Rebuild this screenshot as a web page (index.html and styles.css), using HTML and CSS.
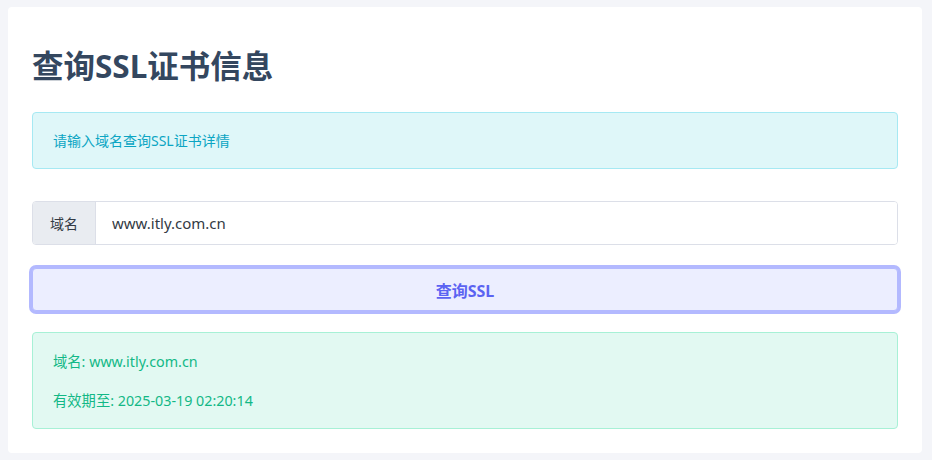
FILE: index.html
```html
<!DOCTYPE html>
<html lang="zh-CN">
<head>
<meta charset="utf-8">
<title>查询SSL证书信息</title>
<link rel="stylesheet" href="styles.css">
</head>
<body>
<main class="card">
  <h1 class="title">查询SSL证书信息</h1>
  <div class="alert alert-info">请输入域名查询SSL证书详情</div>
  <div class="input-group">
    <span class="addon">域名</span>
    <input class="field" type="text" value="www.itly.com.cn">
  </div>
  <button class="btn" type="button">查询SSL</button>
  <div class="alert alert-success result">
    <p class="line">域名: www.itly.com.cn</p>
    <p class="line">有效期至: 2025-03-19 02:20:14</p>
  </div>
</main>
</body>
</html>
```
FILE: styles.css
```css
* { box-sizing: border-box; }
html, body { margin: 0; }
body {
  background: #f4f5f9;
  padding: 7px 10px 0 8px;
  font-family: "Noto Sans", "Noto Sans CJK SC", sans-serif;
  font-size: 14px;
}
.card {
  background: #ffffff;
  border-radius: 4px;
  height: 446px;
  padding: 0 24px;
  display: flex;
  flex-direction: column;
}
.title {
  margin: 40px 0 27px;
  font-size: 31.5px;
  line-height: 38px;
  font-weight: 700;
  color: #34475f;
  font-family: "Noto Sans", "Noto Sans CJK SC", sans-serif;
}
.alert {
  border-radius: 4px;
  border: 1px solid;
  padding: 17px 20px;
  line-height: 21px;
  font-size: 14px;
}
.alert-info {
  background: #dff7f9;
  border-color: #a6e9f3;
  color: #0ba5c3;
}
.input-group {
  margin-top: 32px;
  display: flex;
  height: 44px;
  border: 1px solid #dcdfe8;
  border-radius: 4px;
  overflow: hidden;
}
.addon {
  background: #e9ecf1;
  color: #333a44;
  padding: 0 17px;
  display: flex;
  align-items: center;
  border-right: 1px solid #dcdfe8;
  font-size: 14px;
}
.field {
  flex: 1;
  border: 0;
  outline: none;
  padding: 0 16px;
  font-family: "Noto Sans", "Noto Sans CJK SC", sans-serif;
  font-size: 15px;
  color: #333a44;
  background: #fff;
}
.btn {
  margin-top: 23px;
  height: 43px;
  width: 100%;
  background: #eceeff;
  border: 1px solid #b3b9ff;
  border-radius: 4px;
  box-shadow: 0 0 0 3px #b3b9ff;
  color: #5b63f2;
  font-weight: 700;
  font-size: 16px;
  font-family: "Noto Sans", "Noto Sans CJK SC", sans-serif;
}
.result {
  margin-top: 21px;
  padding: 18px 20px 17px;
  background: #e2f9f2;
  border-color: #a7f1d6;
  color: #12b886;
}
.line { margin: 0; font-size: 14.3px; }
.line + .line { margin-top: 18px; }
```
